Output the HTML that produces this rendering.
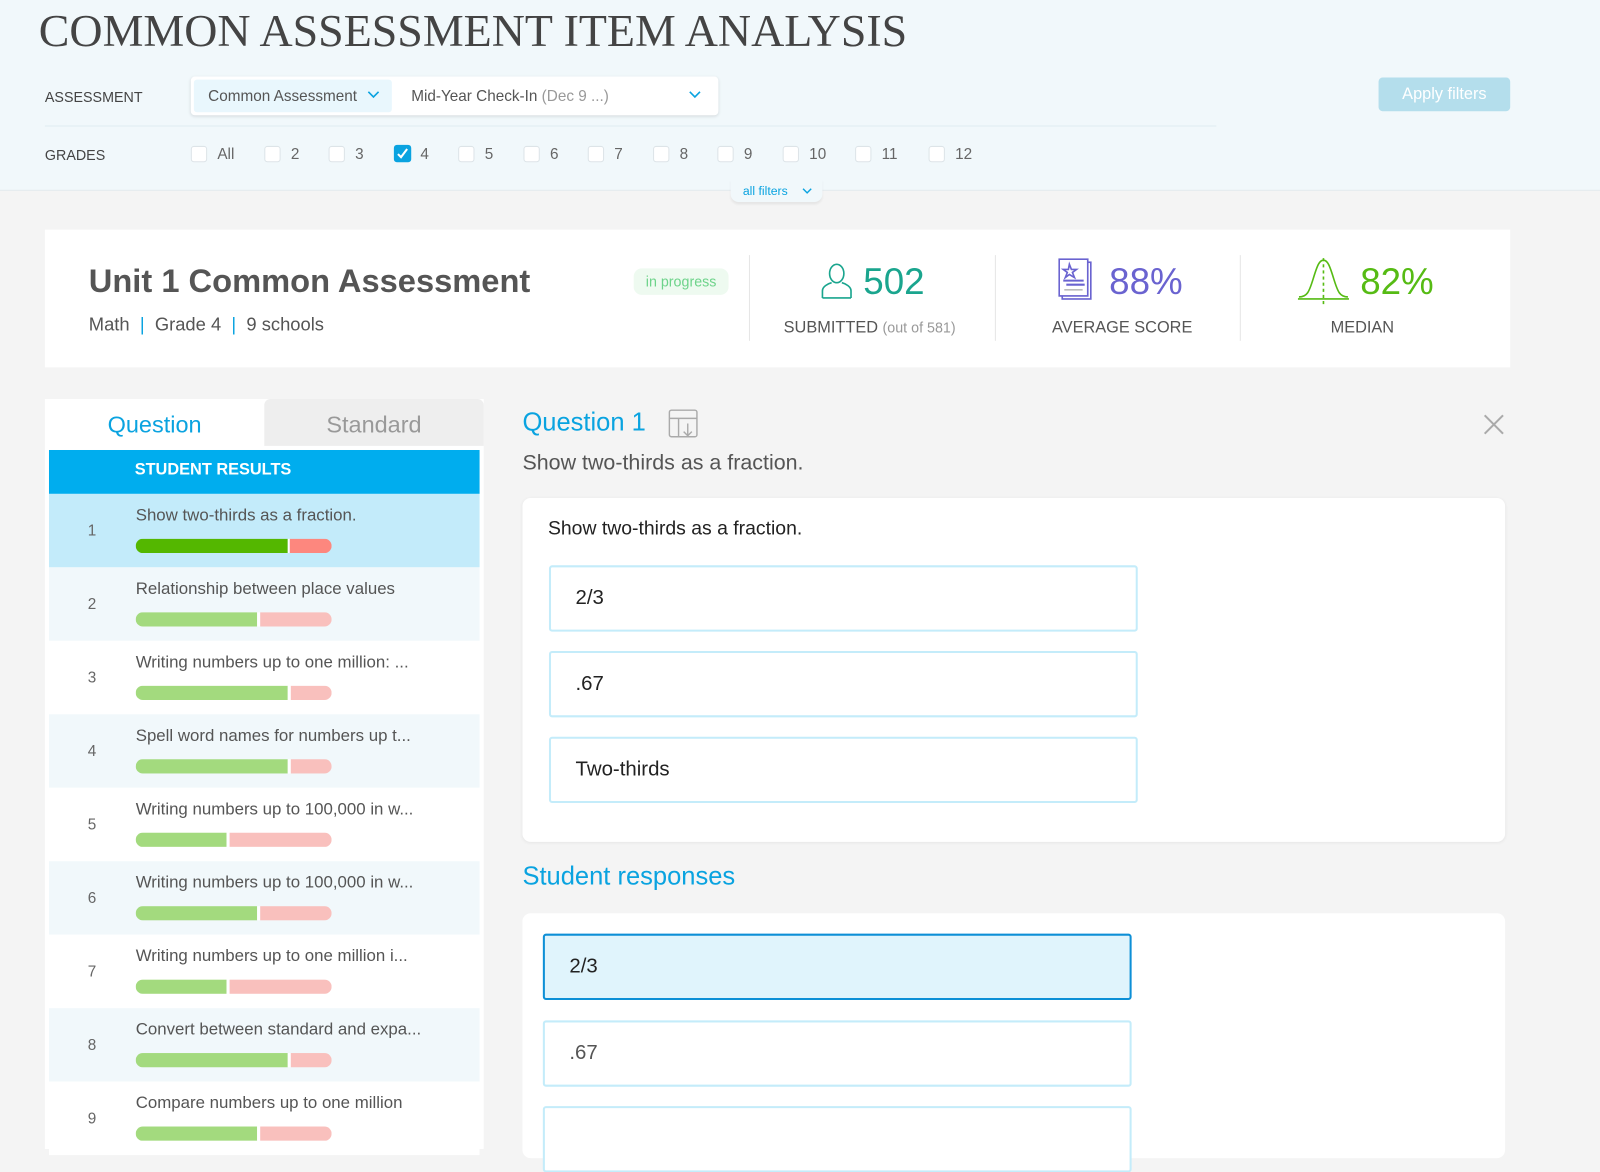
<!DOCTYPE html>
<html><head><meta charset="utf-8"><style>
*{box-sizing:border-box;margin:0;padding:0}
body{width:1600px;height:1126px;overflow:hidden;background:#f4f4f4;font-family:"Liberation Sans",sans-serif;color:#555;position:relative}
#w{position:absolute;left:0;top:0;width:1600px;height:1126px;transform:scale(1.0204);transform-origin:0 0}
.a{position:absolute}
.hdr{left:0;top:0;width:1600px;height:187px;background:#f1f8fb;border-bottom:1px solid #e3eaed}
h1{position:absolute;left:38px;top:4px;font-family:"Liberation Serif",serif;font-weight:normal;font-size:45px;color:#444;white-space:nowrap;letter-spacing:0}
.lbl{font-size:14px;color:#444}
.cb{width:16px;height:16px;border:1px solid #dde4e8;border-radius:3px;background:#fff}
.g{font-size:15px;color:#666}
.card{background:#fff}
.row{left:48px;width:422px;height:72px}
.row .n{position:absolute;left:38px;top:28px;font-size:15px;color:#666}
.row .t{position:absolute;left:85px;top:12px;font-size:16.5px;color:#555;white-space:nowrap}
.bar{position:absolute;left:85px;top:44px;height:14px;width:192px;border-radius:7px;overflow:hidden;display:flex}
.bar i{display:block;height:14px}
.opt{position:absolute;border:2px solid #c4ecfa;border-radius:3px;background:#fff;font-size:20px;color:#222;padding-left:24px}
</style></head><body><div id="w">
<div class="a hdr"></div>
<h1>COMMON ASSESSMENT ITEM ANALYSIS</h1>
<div class="a lbl" style="left:44px;top:87px">ASSESSMENT</div>
<div class="a" style="left:187px;top:75px;width:517px;height:38px;background:#fff;border-radius:4px;box-shadow:0 1px 3px rgba(0,0,0,.12)"></div>
<div class="a" style="left:190px;top:78px;width:194px;height:32px;background:#e9f7fd;border-radius:3px"></div>
<div class="a" style="left:204px;top:86px;font-size:15px;color:#555">Common Assessment</div>
<svg class="a" style="left:360px;top:89px" width="12" height="8"><path d="M1 1l5 5 5-5" stroke="#0aa3e0" stroke-width="1.6" fill="none"/></svg>
<div class="a" style="left:403px;top:86px;font-size:15px;color:#555">Mid-Year Check-In <span style="color:#999">(Dec 9 ...)</span></div>
<svg class="a" style="left:675px;top:89px" width="12" height="8"><path d="M1 1l5 5 5-5" stroke="#0aa3e0" stroke-width="1.6" fill="none"/></svg>
<div class="a" style="left:44px;top:123px;width:1148px;height:1px;background:#e0ecf0"></div>
<div class="a" style="left:1351px;top:76px;width:129px;height:33px;background:#b4deec;border-radius:4px;color:#fff;font-size:16px;text-align:center;line-height:33px">Apply filters</div>
<div class="a lbl" style="left:44px;top:144px">GRADES</div>
<div class="a cb" style="left:187px;top:143px"></div><div class="a g" style="left:213px;top:143px">All</div>
<div class="a cb" style="left:259px;top:143px"></div><div class="a g" style="left:285px;top:143px">2</div>
<div class="a cb" style="left:322px;top:143px"></div><div class="a g" style="left:348px;top:143px">3</div>
<div class="a" style="left:386px;top:142px;width:17px;height:17px;background:#0aa3e0;border-radius:3px"></div>
<svg class="a" style="left:386px;top:142px" width="17" height="17"><path d="M4 9l3 3 6-8" stroke="#fff" stroke-width="2" fill="none"/></svg>
<div class="a g" style="left:412px;top:143px">4</div>
<div class="a cb" style="left:449px;top:143px"></div><div class="a g" style="left:475px;top:143px">5</div>
<div class="a cb" style="left:513px;top:143px"></div><div class="a g" style="left:539px;top:143px">6</div>
<div class="a cb" style="left:576px;top:143px"></div><div class="a g" style="left:602px;top:143px">7</div>
<div class="a cb" style="left:640px;top:143px"></div><div class="a g" style="left:666px;top:143px">8</div>
<div class="a cb" style="left:703px;top:143px"></div><div class="a g" style="left:729px;top:143px">9</div>
<div class="a cb" style="left:767px;top:143px"></div><div class="a g" style="left:793px;top:143px">10</div>
<div class="a cb" style="left:838px;top:143px"></div><div class="a g" style="left:864px;top:143px">11</div>
<div class="a cb" style="left:910px;top:143px"></div><div class="a g" style="left:936px;top:143px">12</div>
<div class="a" style="left:716px;top:176px;width:90px;height:22px;background:#f1f8fb;border-radius:0 0 8px 8px;box-shadow:0 2px 2px rgba(0,0,0,.06)"></div>
<div class="a" style="left:728px;top:180px;font-size:12px;color:#0aa3e0">all filters</div>
<svg class="a" style="left:786px;top:184px" width="10" height="7"><path d="M1 1l4 4 4-4" stroke="#0aa3e0" stroke-width="1.4" fill="none"/></svg>

<div class="a card" style="left:44px;top:225px;width:1436px;height:135px"></div>
<div class="a" style="left:87px;top:257px;font-size:32px;font-weight:bold;color:#555">Unit 1 Common Assessment</div>
<div class="a" style="left:87px;top:308px;font-size:18px;color:#555">Math <span style="color:#0aa3e0">&nbsp;|&nbsp;</span> Grade 4 <span style="color:#0aa3e0">&nbsp;|&nbsp;</span> 9 schools</div>
<div class="a" style="left:621px;top:263px;width:93px;height:26px;background:#eefaf0;border-radius:8px;color:#6dd38a;font-size:14px;text-align:center;line-height:26px">in progress</div>
<div class="a" style="left:734px;top:250px;width:1px;height:84px;background:#e6e6e6"></div>
<div class="a" style="left:975px;top:250px;width:1px;height:84px;background:#e6e6e6"></div>
<div class="a" style="left:1215px;top:250px;width:1px;height:84px;background:#e6e6e6"></div>
<svg class="a" style="left:804px;top:257px" width="32" height="36" fill="none" stroke="#1aa58e" stroke-width="1.6"><ellipse cx="16" cy="11" rx="7" ry="9"/><path d="M2 35v-7c0-4 5-7 9-8M30 35v-7c0-4-5-7-9-8M2 35h28"/></svg>
<div class="a" style="left:846px;top:255px;font-size:36px;color:#1aa58e">502</div>
<div class="a" style="left:768px;top:313px;font-size:16px;color:#555">SUBMITTED <span style="font-size:14px;color:#999">(out of 581)</span></div>
<svg class="a" style="left:1037px;top:253px" width="38" height="42" fill="none" stroke="#6a63d0" stroke-width="1.6"><rect x="4" y="4" width="28" height="36"/><rect x="1" y="1" width="28" height="36" fill="#fff"/><path d="M11 6l2 5h5l-4 3 2 5-5-3-4 3 2-5-4-3h5z"/><path d="M5 22h20M8 26h18" stroke-width="2"/><path d="M6 31h18" stroke="#bbb"/></svg>
<div class="a" style="left:1087px;top:255px;font-size:36px;color:#6a63d0">88%</div>
<div class="a" style="left:1031px;top:313px;font-size:16px;color:#555">AVERAGE SCORE</div>
<svg class="a" style="left:1271px;top:251px" width="52" height="48" fill="none" stroke="#56bb14" stroke-width="1.6"><path d="M2 40c8 0 10-5 14-18s6-18 10-18 6 5 10 18 6 18 14 18M1 42h50"/><path d="M26 2v46" stroke-dasharray="3 3"/></svg>
<div class="a" style="left:1333px;top:255px;font-size:36px;color:#56bb14">82%</div>
<div class="a" style="left:1304px;top:313px;font-size:16px;color:#555">MEDIAN</div>

<div class="a" style="left:44px;top:391px;width:430px;height:735px;background:#fff"></div>
<div class="a" style="left:259px;top:391px;width:215px;height:46px;background:#eeeeee;border-radius:6px 6px 0 0"></div>
<div class="a" style="left:44px;top:403px;width:215px;text-align:center;font-size:23px;color:#0aa3e0">Question</div>
<div class="a" style="left:259px;top:403px;width:215px;text-align:center;font-size:23px;color:#999">Standard</div>
<div class="a" style="left:48px;top:441px;width:422px;height:43px;background:#00adee"></div>
<div class="a" style="left:132px;top:452px;font-size:16px;font-weight:bold;color:#fff">STUDENT RESULTS</div>

<div class="a row" style="top:484px;background:#c3ebfa"><span class="n">1</span><span class="t">Show two-thirds as a fraction.</span><div class="bar"><i style="width:149px;background:#54b700"></i><i style="width:2px;background:#fff"></i><i style="flex:1;background:#fd877e"></i></div></div>
<div class="a row" style="top:556px;background:#f1f8fb"><span class="n">2</span><span class="t">Relationship between place values</span><div class="bar"><i style="width:119px;background:#a3da7e"></i><i style="width:3px;background:#fff"></i><i style="flex:1;background:#f9c0bd"></i></div></div>
<div class="a row" style="top:628px;background:#fff"><span class="n">3</span><span class="t">Writing numbers up to one million: ...</span><div class="bar"><i style="width:149px;background:#a3da7e"></i><i style="width:3px;background:#fff"></i><i style="flex:1;background:#f9c0bd"></i></div></div>
<div class="a row" style="top:700px;background:#f1f8fb"><span class="n">4</span><span class="t">Spell word names for numbers up t...</span><div class="bar"><i style="width:149px;background:#a3da7e"></i><i style="width:3px;background:#fff"></i><i style="flex:1;background:#f9c0bd"></i></div></div>
<div class="a row" style="top:772px;background:#fff"><span class="n">5</span><span class="t">Writing numbers up to 100,000 in w...</span><div class="bar"><i style="width:89px;background:#a3da7e"></i><i style="width:3px;background:#fff"></i><i style="flex:1;background:#f9c0bd"></i></div></div>
<div class="a row" style="top:844px;background:#f1f8fb"><span class="n">6</span><span class="t">Writing numbers up to 100,000 in w...</span><div class="bar"><i style="width:119px;background:#a3da7e"></i><i style="width:3px;background:#fff"></i><i style="flex:1;background:#f9c0bd"></i></div></div>
<div class="a row" style="top:916px;background:#fff"><span class="n">7</span><span class="t">Writing numbers up to one million i...</span><div class="bar"><i style="width:89px;background:#a3da7e"></i><i style="width:3px;background:#fff"></i><i style="flex:1;background:#f9c0bd"></i></div></div>
<div class="a row" style="top:988px;background:#f1f8fb"><span class="n">8</span><span class="t">Convert between standard and expa...</span><div class="bar"><i style="width:149px;background:#a3da7e"></i><i style="width:3px;background:#fff"></i><i style="flex:1;background:#f9c0bd"></i></div></div>
<div class="a row" style="top:1060px;background:#fff"><span class="n">9</span><span class="t">Compare numbers up to one million</span><div class="bar"><i style="width:119px;background:#a3da7e"></i><i style="width:3px;background:#fff"></i><i style="flex:1;background:#f9c0bd"></i></div></div>

<div class="a" style="left:512px;top:400px;font-size:25px;color:#0aa3e0">Question 1</div>
<svg class="a" style="left:655px;top:401px" width="30" height="30" fill="none" stroke="#aaa" stroke-width="1.4"><rect x="1" y="1" width="27" height="26" rx="2"/><path d="M1 9h27M10 9v18M19 14v12M15 22l4 4 4-4"/></svg>
<svg class="a" style="left:1453px;top:405px" width="22" height="22" stroke="#aaa" stroke-width="2"><path d="M2 2l18 18M20 2L2 20"/></svg>
<div class="a" style="left:512px;top:442px;font-size:21px;color:#555">Show two-thirds as a fraction.</div>

<div class="a" style="left:512px;top:488px;width:963px;height:337px;background:#fff;border-radius:8px;box-shadow:0 1px 3px rgba(0,0,0,.06)"></div>
<div class="a" style="left:537px;top:508px;font-size:19px;color:#222">Show two-thirds as a fraction.</div>
<div class="opt" style="left:538px;top:554px;width:577px;height:65px;line-height:61px">2/3</div>
<div class="opt" style="left:538px;top:638px;width:577px;height:65px;line-height:61px">.67</div>
<div class="opt" style="left:538px;top:722px;width:577px;height:65px;line-height:61px">Two-thirds</div>

<div class="a" style="left:512px;top:845px;font-size:25px;color:#0aa3e0">Student responses</div>
<div class="a" style="left:512px;top:895px;width:963px;height:240px;background:#fff;border-radius:8px"></div>
<div class="opt" style="left:532px;top:915px;width:577px;height:65px;line-height:61px;background:#e0f4fc;border-color:#0d8fd6">2/3</div>
<div class="opt" style="left:532px;top:1000px;width:577px;height:65px;line-height:61px;color:#555">.67</div>
<div class="opt" style="left:532px;top:1084px;width:577px;height:65px"></div>
</div></body></html>
